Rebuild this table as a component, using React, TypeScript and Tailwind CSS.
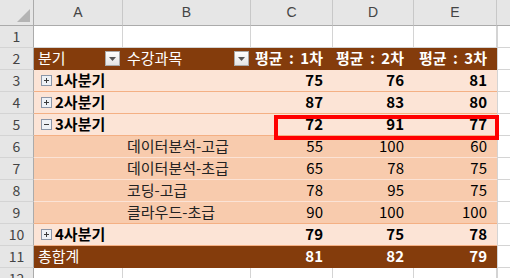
import React from 'react'

const font = { fontFamily: '"Noto Sans CJK KR", "Noto Sans", sans-serif' }

type Row =
  | { n: number; kind: 'empty' }
  | { n: number; kind: 'head' }
  | { n: number; kind: 'quarter'; label: string; vals: number[]; open: boolean }
  | { n: number; kind: 'detail'; label: string; vals: number[]; last?: boolean }
  | { n: number; kind: 'total'; vals: number[] }

const rows: Row[] = [
  { n: 1, kind: 'empty' },
  { n: 2, kind: 'head' },
  { n: 3, kind: 'quarter', label: '1사분기', vals: [75, 76, 81], open: false },
  { n: 4, kind: 'quarter', label: '2사분기', vals: [87, 83, 80], open: false },
  { n: 5, kind: 'quarter', label: '3사분기', vals: [72, 91, 77], open: true },
  { n: 6, kind: 'detail', label: '데이터분석-고급', vals: [55, 100, 60] },
  { n: 7, kind: 'detail', label: '데이터분석-초급', vals: [65, 78, 75] },
  { n: 8, kind: 'detail', label: '코딩-고급', vals: [78, 95, 75] },
  { n: 9, kind: 'detail', label: '클라우드-초급', vals: [90, 100, 100], last: true },
  { n: 10, kind: 'quarter', label: '4사분기', vals: [79, 75, 78], open: false },
  { n: 11, kind: 'total', vals: [81, 82, 79] },
  { n: 12, kind: 'empty' },
]

const valWidths = ['w-[82px]', 'w-[81px]', 'w-[83px]']

function ToggleBox({ open }: { open: boolean }) {
  return (
    <svg width="11" height="11" viewBox="0 0 11 11" className="shrink-0">
      <rect x="0.5" y="0.5" width="10" height="10" fill="#eef1f6" stroke="#8b96a8" />
      <path d="M3 5.5h5" stroke="#3a3a3a" strokeWidth="1" />
      {!open && <path d="M5.5 3v5" stroke="#3a3a3a" strokeWidth="1" />}
    </svg>
  )
}

function Dropdown() {
  return (
    <div className="w-[15px] h-[15px] border border-[#a9a9a9] bg-gradient-to-b from-white to-[#e4e4e4] flex items-center justify-center shrink-0">
      <svg width="7" height="4" viewBox="0 0 7 4">
        <path d="M0 0h7L3.5 4z" fill="#555" />
      </svg>
    </div>
  )
}

function Values({ vals, bold, light }: { vals: number[]; bold?: boolean; light?: boolean }) {
  return (
    <>
      {vals.map((v, i) => (
        <div
          key={i}
          className={`${valWidths[i]} h-full flex items-center justify-end pr-[10px] ${bold ? 'font-bold' : ''} ${light ? 'text-white' : 'text-black'}`}
        >
          {v}
        </div>
      ))}
    </>
  )
}

function RowNum({ n }: { n: number }) {
  return (
    <div className="w-[34px] h-full shrink-0 bg-[#e6e6e6] border-r border-[#ababab] border-b border-b-[#d4d4d4] flex items-center justify-center text-[14px] text-[#444]">
      {n}
    </div>
  )
}

function PivotCells({ row }: { row: Row }) {
  if (row.kind === 'head') {
    return (
      <div className="w-[463px] h-full flex bg-[#843c0c] text-white text-[15px] border-b border-[#843c0c]">
        <div className="w-[89px] flex items-center justify-between pl-[4px] pr-[3px]">
          <span>분기</span>
          <Dropdown />
        </div>
        <div className="w-[128px] flex items-center justify-between pl-[4px] pr-[2px]">
          <span>수강과목</span>
          <Dropdown />
        </div>
        {['평균 : 1차', '평균 : 2차', '평균 : 3차'].map((t, i) => (
          <div
            key={t}
            className={`${valWidths[i]} flex items-center justify-end pr-[10px] font-bold whitespace-nowrap [word-spacing:3px]`}
          >
            {t}
          </div>
        ))}
      </div>
    )
  }
  if (row.kind === 'quarter') {
    return (
      <div className="w-[463px] h-full flex bg-[#fce4d6] text-[15px] border-b border-[#f4b084]">
        <div className="w-[217px] flex items-center gap-[3px] pl-[7px] font-bold text-black">
          <ToggleBox open={row.open} />
          <span>{row.label}</span>
        </div>
        <Values vals={row.vals} bold />
      </div>
    )
  }
  if (row.kind === 'detail') {
    return (
      <div
        className={`w-[463px] h-full flex bg-[#f8cbad] text-[15px] text-[#222] border-b ${row.last ? 'border-[#f4b084]' : 'border-[#fbe3d6]'}`}
      >
        <div className="w-[89px]" />
        <div className="w-[128px] flex items-center pl-[4px]">{row.label}</div>
        <Values vals={row.vals} />
      </div>
    )
  }
  if (row.kind === 'total') {
    return (
      <div className="w-[463px] h-full flex bg-[#843c0c] text-white text-[15px] border-b border-[#843c0c]">
        <div className="w-[217px] flex items-center pl-[4px]">총합계</div>
        <Values vals={row.vals} bold light />
      </div>
    )
  }
  return null
}

export default function App() {
  const colWidths = ['w-[89px]', 'w-[128px]', 'w-[82px]', 'w-[81px]', 'w-[83px]']
  return (
    <div className="relative w-[510px] h-[278px] overflow-hidden bg-white" style={font}>
      {/* column headers */}
      <div className="flex h-[26px]">
        <div className="w-[34px] h-full shrink-0 bg-[#e6e6e6] border-r border-b border-[#ababab] flex items-end justify-end pr-[3px] pb-[3px]">
          <svg width="13" height="13" viewBox="0 0 13 13">
            <path d="M13 0V13H0z" fill="#b4b4b4" />
          </svg>
        </div>
        {['A', 'B', 'C', 'D', 'E'].map((c, i) => (
          <div
            key={c}
            className={`${colWidths[i]} h-full shrink-0 bg-[#e6e6e6] border-r border-[#c8c8c8] border-b border-b-[#ababab] flex items-center justify-center text-[14px] text-[#444]`}
            style={{ fontFamily: '"Liberation Sans", sans-serif' }}
          >
            {c}
          </div>
        ))}
        <div className="flex-1 h-full bg-[#e6e6e6] border-b border-[#ababab]" />
      </div>

      {rows.map(row => (
        <div key={row.n} className="flex h-[22px]">
          <RowNum n={row.n} />
          {row.kind === 'empty' ? (
            colWidths.map((w, i) => (
              <div key={i} className={`${w} h-full shrink-0 border-r border-b border-[#d4d4d4]`} />
            ))
          ) : (
            <PivotCells row={row} />
          )}
          <div className="flex-1 h-full border-b border-[#d4d4d4] border-l border-l-[#d4d4d4]" />
        </div>
      ))}

      {/* highlight box */}
      <div className="absolute left-[274px] top-[115px] w-[225px] h-[25px] border-[4px] border-[#ff0000]" />
    </div>
  )
}
